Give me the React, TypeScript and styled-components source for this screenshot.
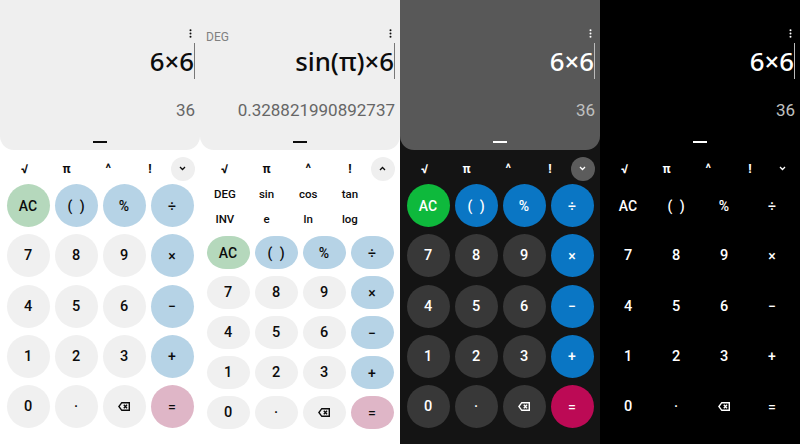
import React from "react";
import styled, { createGlobalStyle, ThemeProvider } from "styled-components";

type Look = {
  bg: string; screen: string; ink: string; dim: string; caret: string; num: string;
  op: string; ac: string; eq: string; toggle: string; opInk: string;
};

const light: Look = { bg: "#ffffff", screen: "#efefef", ink: "#0c0c0c", dim: "#666666", caret: "#777777", num: "#f0f0f0", op: "#b6d3e6", ac: "#b5d8bc", eq: "#dfb6c7", toggle: "#efefef", opInk: "#0c0c0c" };
const dark: Look = { bg: "#141414", screen: "#585858", ink: "#ffffff", dim: "#c0c0c0", caret: "#bbbbbb", num: "#383838", op: "#0a76c4", ac: "#0eb93c", eq: "#bc0a55", toggle: "#5c5c5c", opInk: "#ffffff" };
const black: Look = { bg: "#000000", screen: "#000000", ink: "#ffffff", dim: "#c0c0c0", caret: "#bbbbbb", num: "#000000", op: "#000000", ac: "#000000", eq: "#000000", toggle: "#000000", opInk: "#ffffff" };

const Global = createGlobalStyle`
  html, body { margin: 0; padding: 0; background: #000; }
  body { font-family: Roboto, "Liberation Sans", sans-serif; }
`;

const Screen = styled.div`
  display: grid;
  grid-template-columns: repeat(4, 200px);
  width: 800px;
  height: 444px;
  overflow: hidden;
`;

const Panel = styled.section`
  display: flex;
  flex-direction: column;
  height: 444px;
  background: ${(p) => (p.theme as Look).bg};
`;

const Display = styled.header`
  height: 150px;
  box-sizing: border-box;
  display: flex;
  flex-direction: column;
  padding: 29px 5px 0 6px;
  background: ${(p) => (p.theme as Look).screen};
  border-radius: 0 0 14px 14px;
`;

const TopRow = styled.div`
  display: flex;
  justify-content: space-between;
  align-items: flex-start;
  height: 14px;
`;

const Mode = styled.span`
  font-size: 12px;
  line-height: 17px;
  color: #808080;
`;

const MenuIcon = styled.svg`
  width: 3px;
  height: 9px;
  margin-left: auto;
  margin-right: 3px;
  fill: ${(p) => (p.theme as Look).ink};
`;

const Expression = styled.div`
  display: flex;
  justify-content: flex-end;
  align-items: center;
  height: 36px;
  font-family: "Noto Sans", sans-serif;
  font-size: 25.8px;
  font-weight: 500;
  color: ${(p) => (p.theme as Look).ink};
`;

const Caret = styled.i`
  width: 1px;
  height: 36px;
  background: ${(p) => (p.theme as Look).caret};
`;

const Result = styled.div`
  margin-top: 20px;
  text-align: right;
  font-size: 17px;
  line-height: 22px;
  color: ${(p) => (p.theme as Look).dim};
`;

const Handle = styled.div`
  width: 14px;
  height: 2px;
  margin: auto auto 7px;
  background: ${(p) => (p.theme as Look).ink};
  position: relative;
  left: -0.5px;
`;

const Science = styled.div`
  display: grid;
  grid-template-columns: repeat(4, 41.7px) 24px;
  grid-auto-rows: 25px;
  padding: 6px 0 0 4px;
  height: 25px;
  align-items: center;
`;

const ScienceExtra = styled(Science)`
  padding-top: 0;
  height: 50px;
`;

const Fn = styled.span<{ $word?: boolean }>`
  text-align: center;
  font-size: ${(p) => (p.$word ? 11.5 : 12.5)}px;
  font-weight: ${(p) => (p.$word ? 500 : 700)};
  color: ${(p) => (p.theme as Look).ink};
`;

const Toggle = styled.span`
  width: 24px;
  height: 24px;
  border-radius: 50%;
  display: flex;
  align-items: center;
  justify-content: center;
  background: ${(p) => (p.theme as Look).toggle};
  color: ${(p) => (p.theme as Look).ink};
`;

const Chevron = styled.svg`
  width: 7px;
  height: 5px;
  fill: none;
  stroke: currentColor;
  stroke-width: 1.3;
`;

const Keys = styled.div<{ $tall: boolean }>`
  display: grid;
  grid-template-columns: repeat(4, 43px);
  grid-auto-rows: ${(p) => (p.$tall ? 43 : 33)}px;
  column-gap: 5px;
  row-gap: ${(p) => (p.$tall ? 7.3 : 7)}px;
  padding: ${(p) => (p.$tall ? 3 : 5.3)}px 0 0 6.5px;
`;

const Key = styled.button<{ $kind: "num" | "op" | "ac" | "eq"; $tall: boolean }>`
  all: unset;
  display: flex;
  align-items: center;
  justify-content: center;
  border-radius: ${(p) => (p.$tall ? "50%" : "19px / 16.5px")};
  font-family: Roboto, sans-serif;
  font-size: ${(p) => (p.$kind === "num" ? 14.5 : 14)}px;
  font-weight: 500;
  word-spacing: 4px;
  background: ${(p) => (p.theme as Look)[p.$kind]};
  color: ${(p) => (p.$kind === "num" ? (p.theme as Look).ink : (p.theme as Look).opInk)};
`;

const Back = styled.svg`
  width: 12px;
  height: 9px;
  fill: none;
  stroke: currentColor;
  stroke-width: 1.4;
`;

const Kebab = () => (
  <MenuIcon viewBox="0 0 3 9">
    <circle cx="1.5" cy="1.2" r="1" />
    <circle cx="1.5" cy="4.5" r="1" />
    <circle cx="1.5" cy="7.8" r="1" />
  </MenuIcon>
);

const KEYS: { t: string; k: "num" | "op" | "ac" | "eq" }[] = [
  { t: "AC", k: "ac" }, { t: "( )", k: "op" }, { t: "%", k: "op" }, { t: "÷", k: "op" },
  { t: "7", k: "num" }, { t: "8", k: "num" }, { t: "9", k: "num" }, { t: "×", k: "op" },
  { t: "4", k: "num" }, { t: "5", k: "num" }, { t: "6", k: "num" }, { t: "−", k: "op" },
  { t: "1", k: "num" }, { t: "2", k: "num" }, { t: "3", k: "num" }, { t: "+", k: "op" },
  { t: "0", k: "num" }, { t: "·", k: "num" }, { t: "back", k: "num" }, { t: "=", k: "eq" },
];

const Calculator = ({ look, expanded }: { look: Look; expanded?: boolean }) => (
  <ThemeProvider theme={look}>
    <Panel>
      <Display>
        <TopRow>
          {expanded && <Mode>DEG</Mode>}
          <Kebab />
        </TopRow>
        <Expression>
          {expanded ? "sin(π)×6" : "6×6"}
          <Caret />
        </Expression>
        <Result>{expanded ? "0.328821990892737" : "36"}</Result>
        <Handle />
      </Display>
      <Science>
        <Fn>√</Fn>
        <Fn>π</Fn>
        <Fn>^</Fn>
        <Fn>!</Fn>
        <Toggle>
          <Chevron viewBox="0 0 7 5">
            <path d={expanded ? "M1 4 L3.5 1.5 L6 4" : "M1 1 L3.5 3.5 L6 1"} />
          </Chevron>
        </Toggle>
      </Science>
      {expanded && (
        <ScienceExtra>
          {["DEG", "sin", "cos", "tan", "", "INV", "e", "ln", "log", ""].map((w, i) => (
            <Fn key={i} $word>{w}</Fn>
          ))}
        </ScienceExtra>
      )}
      <Keys $tall={!expanded}>
        {KEYS.map(({ t, k }) => (
          <Key key={t} $kind={k} $tall={!expanded}>
            {t === "back" ? (
              <Back viewBox="0 0 12 9">
                <path d="M3.8 .7 H11.3 V8.3 H3.8 L.9 4.5 Z" />
                <path d="M5.8 2.8 L9 6.2 M9 2.8 L5.8 6.2" />
              </Back>
            ) : (
              t
            )}
          </Key>
        ))}
      </Keys>
    </Panel>
  </ThemeProvider>
);

export default function App() {
  return (
    <>
      <Global />
      <Screen>
        <Calculator look={light} />
        <Calculator look={light} expanded />
        <Calculator look={dark} />
        <Calculator look={black} />
      </Screen>
    </>
  );
}
